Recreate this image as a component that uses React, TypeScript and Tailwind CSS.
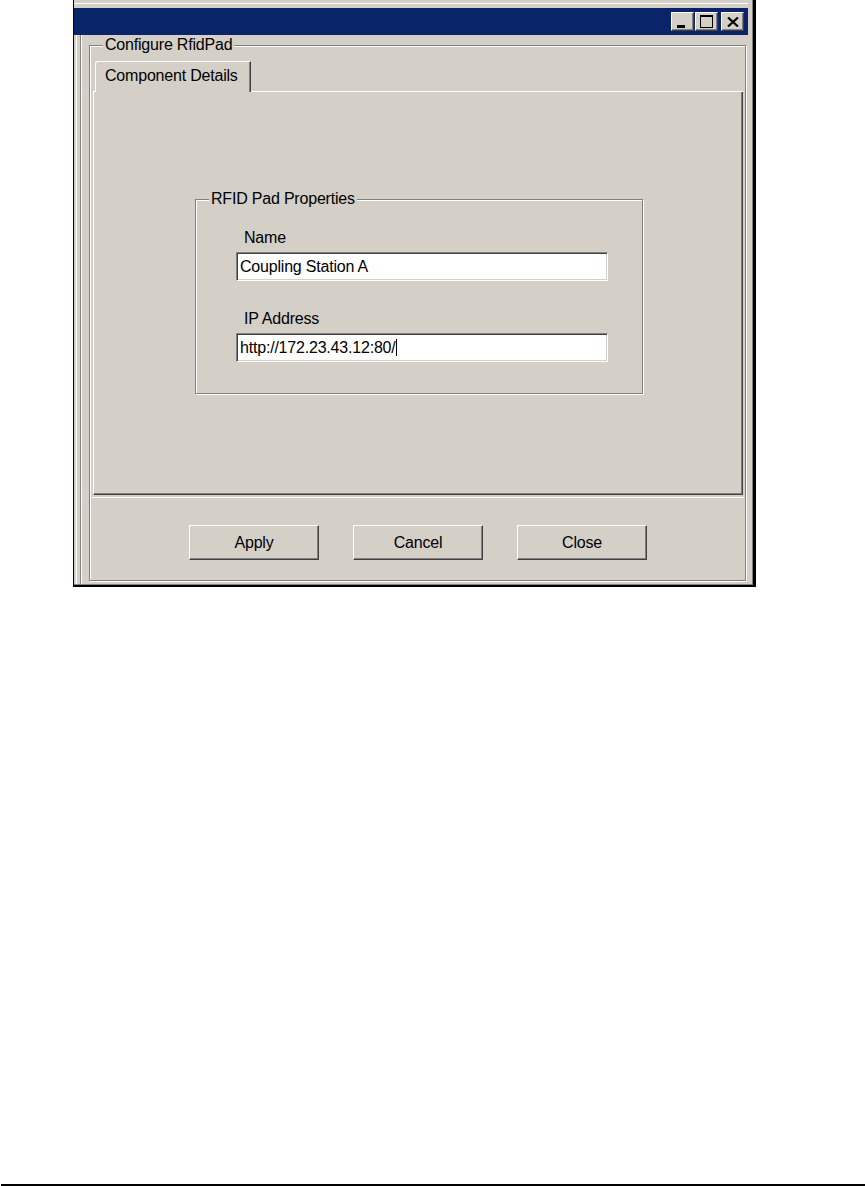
import React from "react";

const raised =
  "bg-[#d4d0c8] border border-t-white border-l-white border-r-[#404040] border-b-[#404040] shadow-[inset_-1px_-1px_0_#808080]";
const sunken =
  "bg-white border border-t-[#808080] border-l-[#808080] border-r-white border-b-white shadow-[inset_1px_1px_0_#404040,inset_-1px_-1px_0_#d4d0c8]";
const etched =
  "relative border border-[#808080] shadow-[inset_1px_1px_0_#fff,1px_1px_0_#fff]";

function CaptionButton({ kind }: { kind: "min" | "max" | "close" }) {
  return (
    <div className={`w-[23px] h-[19px] flex items-center justify-center ${raised}`}>
      {kind === "min" && <div className="w-[8px] h-[3px] bg-black mt-[9px] mr-[3px]" />}
      {kind === "max" && <div className="w-[13px] h-[13px] border border-black border-t-2" />}
      {kind === "close" && (
        <svg width="12" height="10" viewBox="0 0 12 10">
          <path d="M1 0.5 L11 9.5 M11 0.5 L1 9.5" stroke="#000" strokeWidth="2.2" />
        </svg>
      )}
    </div>
  );
}

function Legend({ text }: { text: string }) {
  return (
    <span className="absolute left-[13px] top-[-10px] px-[2px] bg-[#d4d0c8] whitespace-nowrap">
      {text}
    </span>
  );
}

function Field({ label, value, caret }: { label: string; value: string; caret?: boolean }) {
  return (
    <div className="flex flex-col">
      <div className="ml-[48px] h-[18px]">{label}</div>
      <div className={`ml-[40px] mt-[5px] w-[372px] h-[29px] flex items-center pl-[3px] ${sunken}`}>
        <span>{value}</span>
        {caret && <span className="inline-block w-px h-[17px] bg-black" />}
      </div>
    </div>
  );
}

function PushButton({ label }: { label: string }) {
  return (
    <div className={`w-[130px] h-[35px] flex items-center justify-center ${raised}`}>
      {label}
    </div>
  );
}

export default function App() {
  return (
    <div className="w-[866px] h-[1186px] bg-white flex flex-col font-['Liberation_Sans',Arial,sans-serif] text-[16px] leading-[18px] tracking-[-0.2px] text-black">
      <div className="ml-[73px] w-[683px] h-[587px] bg-[#d4d0c8] border-l border-l-black border-r-[3px] border-r-black border-b-2 border-b-black flex flex-col">
        <div className="flex-1 flex flex-col border-r border-b border-[#808080]">
          <div className="h-[3px]" />
          <div className="h-px bg-white mr-[4px]" />
          <div className="h-[4px]" />
          <div className="h-[27px] mr-[4px] bg-[#0a246a] flex items-center justify-end pr-[4px]">
            <CaptionButton kind="min" />
            <div className="w-px" />
            <CaptionButton kind="max" />
            <div className="w-[3px]" />
            <CaptionButton kind="close" />
          </div>

          <div className="flex-1 flex">
            <div className="w-[2px]" />
            <div className="w-px bg-white" />
            <div className="w-[3px]" />
            <div className="w-px bg-[#808080]" />
            <div className="w-px bg-white" />

            <div className={`ml-[7px] mt-[10px] mb-[3px] w-[657px] flex flex-col ${etched}`}>
              <Legend text="Configure RfidPad" />

              <div className="ml-[3px] mt-[15px] w-[650px] h-[31px] flex">
                <div className="w-[2px] border-b border-white" />
                <div className="w-[156px] h-[31px] border-t border-l border-r border-t-white border-l-white border-r-[#404040] rounded-tl-[3px] shadow-[inset_-1px_0_0_#808080] pl-[9px] pt-[5px]">
                  Component Details
                </div>
                <div className="flex-1 border-b border-white" />
              </div>

              <div className="ml-[3px] w-[650px] h-[403px] border-l border-r border-b border-l-white border-r-[#404040] border-b-[#404040] shadow-[inset_-1px_-1px_0_#808080]">
                <div className={`ml-[101px] mt-[107px] w-[448px] h-[195px] ${etched}`}>
                  <Legend text="RFID Pad Properties" />
                  <div className="pt-[29px] flex flex-col gap-[29px]">
                    <Field label="Name" value="Coupling Station A" />
                    <Field label="IP Address" value="http://172.23.43.12:80/" caret />
                  </div>
                </div>
              </div>

              <div className="ml-[2px] mr-px mt-[2px] h-px bg-white" />

              <div className="ml-[99px] mt-[27px] flex gap-[34px]">
                <PushButton label="Apply" />
                <PushButton label="Cancel" />
                <PushButton label="Close" />
              </div>
            </div>
          </div>
        </div>
      </div>

      <div className="mt-auto ml-px mr-px h-[2px] bg-black" />
    </div>
  );
}
